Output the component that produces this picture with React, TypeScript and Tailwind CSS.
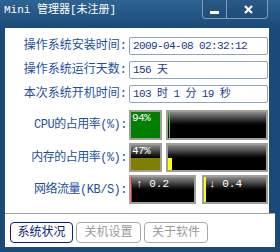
import React from "react"

const mono = "font-['Liberation_Mono','Noto_Sans_CJK_SC',monospace]"

function InfoRow({ label, value }: { label: string; value: string }) {
  return (
    <div className="flex items-center h-[18px]">
      <div className="w-[124px] pr-[2px] text-right text-[12px] leading-none text-[#1d4f9e] whitespace-nowrap">{label}</div>
      <div className="flex-1 h-full border border-[#8ea4bf] rounded-[2px] flex items-center pl-[3px]">
        <span className={`${mono} text-[11px] tracking-[-0.6px] text-[#17398a] leading-none`}>{value}</span>
      </div>
    </div>
  )
}

const boxCls =
  "relative border-2 border-[#a29f98] bg-[linear-gradient(to_bottom,#8c8c8c,#1a1a1a_10px,#000_13px)] overflow-hidden"

export default function App() {
  const cpu = 94
  const mem = 47

  return (
    <div className={`w-[280px] h-[252px] bg-[#1c4a78] flex flex-col ${mono}`}>
      {/* title bar */}
      <div className="h-[28px] flex items-start bg-[linear-gradient(to_bottom,#2e6493,#1c4a78)]">
        <div className="pl-[4px] pt-[4px] text-[11px] leading-[12px] text-white whitespace-nowrap">
          Mini 管理器[未注册]
        </div>
        <div className="ml-auto mr-[12px] flex">
          <div className="w-[25px] h-[19px] border border-t-0 border-[#7f9bb8] rounded-bl-[4px] bg-[linear-gradient(to_bottom,#2a5985,#1f4d7a)] flex items-end justify-center pb-[4px]">
            <div className="w-[9px] h-[3px] bg-white" />
          </div>
          <div className="w-[41px] h-[19px] border border-t-0 border-l-0 border-[#7f9bb8] rounded-br-[4px] bg-[linear-gradient(to_bottom,#2a5985,#1f4d7a)] flex items-center justify-center pl-[2px]">
            <svg width="9" height="9" viewBox="0 0 9 9">
              <path d="M1 1 L8 8 M8 1 L1 8" stroke="white" strokeWidth="2.2" />
            </svg>
          </div>
        </div>
      </div>

      {/* body */}
      <div className="flex-1 flex flex-col px-[5px] pb-[5px]">
        <div className="h-[185px] flex">
          <div className="flex-1 bg-white pt-[9px] pr-[1px] flex flex-col">
            <div className="flex flex-col gap-[6px]">
              <InfoRow label="操作系统安装时间:" value="2009-04-08 02:32:12" />
              <InfoRow label="操作系统运行天数:" value="156 天" />
              <InfoRow label="本次系统开机时间:" value="103 时 1 分 19 秒" />
            </div>

            <div className="mt-[7px] flex flex-col gap-[3px]">
              {/* CPU */}
              <div className="flex items-center h-[30px]">
                <div className="w-[124px] pr-[2px] text-right text-[12px] leading-none text-[#1d4f9e] whitespace-nowrap tracking-[-0.5px]">CPU的占用率(%):</div>
                <div className={`${boxCls} w-[33px] h-full`}>
                  <div className="absolute left-0 right-0 bottom-0 bg-[#008000]" style={{ height: `${cpu + 6}%` }} />
                  <span className="absolute left-[1px] top-[1px] text-[11px] tracking-[-0.6px] leading-none text-white">{cpu}%</span>
                </div>
                <div className={`${boxCls} ml-[4px] flex-1 h-full`}>
                  <div className="absolute left-[1px] top-0 bottom-0 w-[1px] bg-[#3bd23b]" />
                </div>
              </div>

              {/* memory */}
              <div className="flex items-center h-[29px]">
                <div className="w-[124px] pr-[2px] text-right text-[12px] leading-none text-[#1d4f9e] whitespace-nowrap tracking-[-0.5px]">内存的占用率(%):</div>
                <div className={`${boxCls} w-[33px] h-full`}>
                  <div className="absolute left-0 right-0 bottom-0 bg-[#808000]" style={{ height: `${mem}%` }} />
                  <span className="absolute left-[1px] top-[1px] text-[11px] tracking-[-0.6px] leading-none text-white">{mem}%</span>
                </div>
                <div className={`${boxCls} ml-[4px] flex-1 h-full`}>
                  <div className="absolute left-0 bottom-0 w-[4px] bg-[#ffff00]" style={{ height: `${mem}%` }} />
                </div>
              </div>

              {/* network */}
              <div className="flex items-center h-[29px]">
                <div className="w-[124px] pr-[2px] text-right text-[12px] leading-none text-[#1d4f9e] whitespace-nowrap tracking-[-0.5px]">网络流量(KB/S):</div>
                <div className={`${boxCls} w-[67px] h-full`}>
                  <div className="absolute left-0 top-0 bottom-0 w-[1px] bg-[#e02020]" />
                  <span className="absolute left-[5px] top-[2px] text-[11px] leading-none text-white whitespace-pre">↑ 0.2</span>
                </div>
                <div className={`${boxCls} ml-[6px] flex-1 h-full`}>
                  <div className="absolute left-0 top-0 bottom-0 w-[2px] bg-[#ffff00]" />
                  <span className="absolute left-[5px] top-[2px] text-[11px] leading-none text-white whitespace-pre">↓ 0.4</span>
                </div>
              </div>
            </div>
          </div>
          <div className="w-[6px] bg-[#1c4a78]" />
        </div>

        {/* tabs */}
        <div className="flex-1 bg-white border-t border-[#a0a0a0] flex items-start gap-[3px] pl-[5px] pt-[8px]">
          <div className="w-[63px] h-[21px] border border-[#0c1c82] rounded-[4px] flex items-center justify-center text-[12px] text-[#0c1c6e]">系统状况</div>
          <div className="w-[65px] h-[21px] border border-[#a8a8a8] rounded-[4px] flex items-center justify-center text-[12px] text-[#9a9a9a]">关机设置</div>
          <div className="w-[64px] h-[21px] border border-[#a8a8a8] rounded-[4px] flex items-center justify-center text-[12px] text-[#9a9a9a]">关于软件</div>
        </div>
      </div>
    </div>
  )
}
